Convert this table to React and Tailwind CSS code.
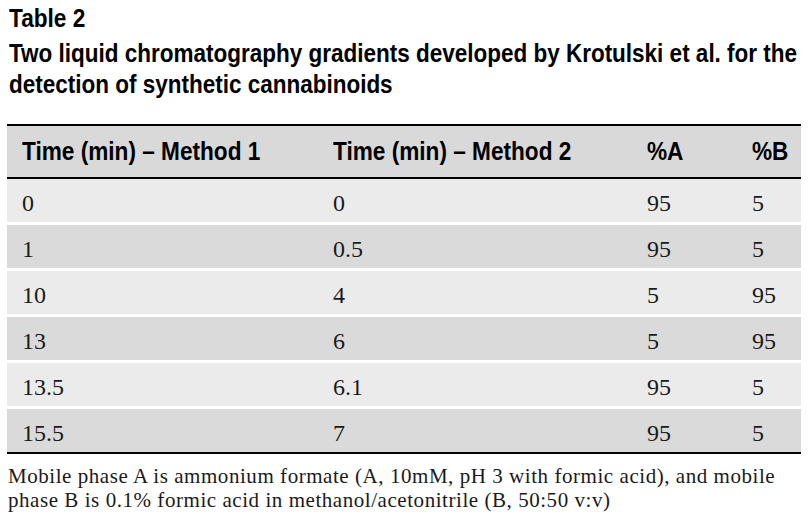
const rows = [
  ['0', '0', '95', '5'],
  ['1', '0.5', '95', '5'],
  ['10', '4', '5', '95'],
  ['13', '6', '5', '95'],
  ['13.5', '6.1', '95', '5'],
  ['15.5', '7', '95', '5'],
]

const heads = ['Time (min) – Method 1', 'Time (min) – Method 2', '%A', '%B']

// condensed bold sans (squeezed Liberation Sans, no narrow face installed)
const sans = "font-['Liberation_Sans',Arial,sans-serif] font-bold"
const serif = "font-['Liberation_Serif','Times_New_Roman',serif]"
const cols = 'grid grid-cols-[311px_314px_105px_1fr] pl-[15px] items-center'

export default function App() {
  return (
    <div className="w-[810px] h-[516px] bg-white text-black overflow-hidden">
      <div className={`${sans} pl-[9px] pt-[4px] text-[26px]`}>
        <div className="leading-[28px] w-max origin-left scale-x-[0.87]">Table 2</div>
        <div className="leading-[31px] mt-[6px] w-max origin-left scale-x-[0.865]">
          Two liquid chromatography gradients developed by Krotulski et al. for the
          <br />
          detection of synthetic cannabinoids
        </div>
      </div>

      <div className="ml-[7px] w-[794px] mt-[24px] border-t-2 border-black">
        <div className={`${sans} ${cols} h-[53px] bg-[#d9d9d9] border-b-2 border-black text-[26px]`}>
          {heads.map((h) => (
            <div key={h} className="whitespace-nowrap">
              <span className="inline-block origin-left scale-x-[0.87]">{h}</span>
            </div>
          ))}
        </div>
        <div className="flex flex-col gap-[3px] border-b-2 border-black">
          {rows.map((r, i) => (
            <div
              key={i}
              className={`${serif} ${cols} h-[43px] pt-[5px] text-[24px] text-[#1a1a1a] ${
                i % 2 === 0 ? 'bg-[#ebebeb]' : 'bg-[#dadada]'
              }`}
            >
              {r.map((c, j) => (
                <div key={j}>{c}</div>
              ))}
            </div>
          ))}
        </div>
      </div>

      <p className={`${serif} text-[21px] leading-[24px] tracking-[0.55px] pl-[8px] pt-[10px] whitespace-nowrap text-[#1a1a1a]`}>
        Mobile phase A is ammonium formate (A, 10mM, pH 3 with formic acid), and mobile
        <br />
        phase B is 0.1% formic acid in methanol/acetonitrile (B, 50:50 v:v)
      </p>
    </div>
  )
}
